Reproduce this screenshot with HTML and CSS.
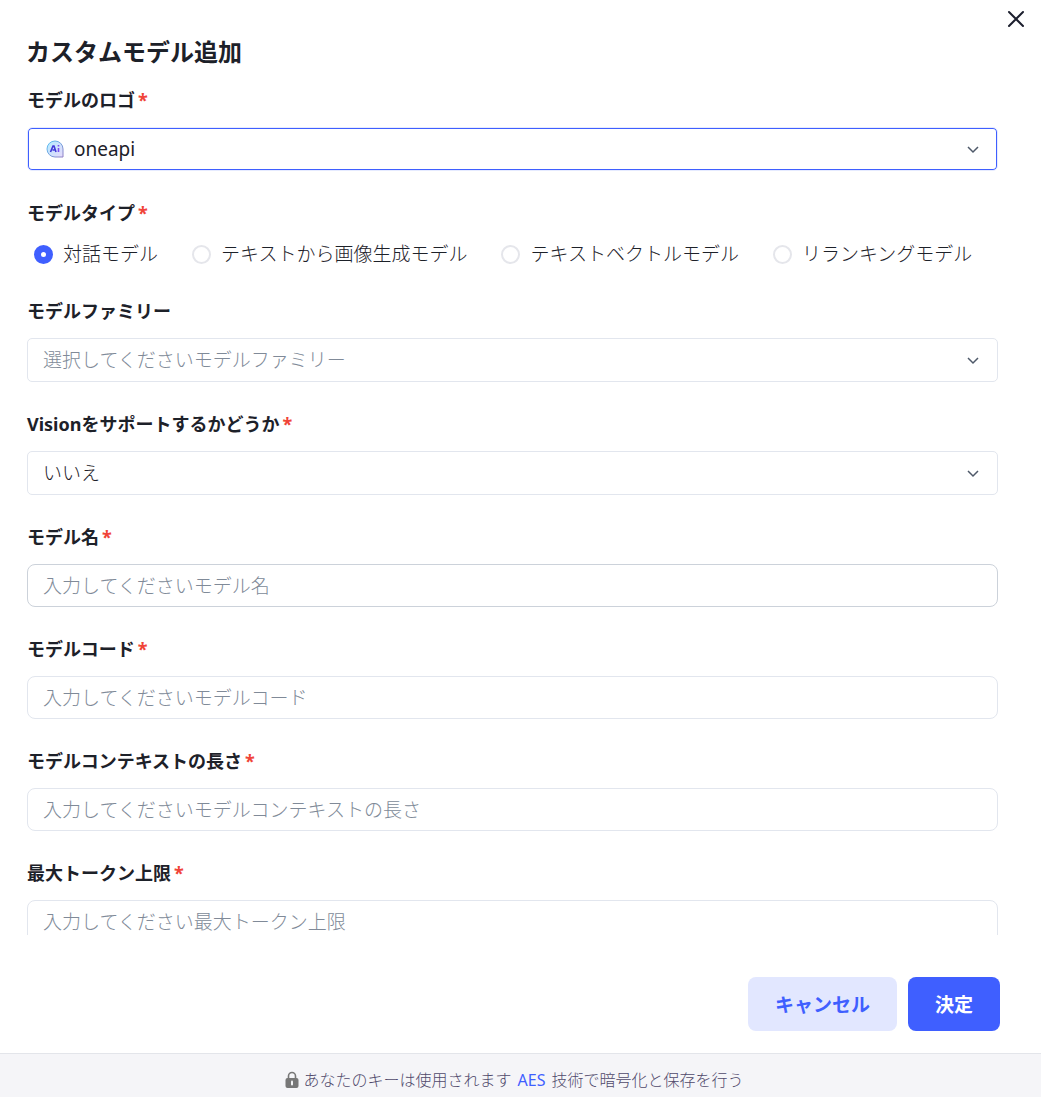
FILE: index.html
```html
<!DOCTYPE html>
<html lang="ja">
<head>
    <meta charset="UTF-8">
    <meta name="viewport" content="width=device-width, initial-scale=1.0">
    <title>カスタムモデル追加</title>
    <link rel="stylesheet" href="styles.css">
</head>
<body>

<div class="modal">
    <button type="button" class="close-btn" aria-label="閉じる">
        <svg width="18" height="18" viewBox="0 0 18 18" fill="none" stroke="#1c1f2e" stroke-width="2" stroke-linecap="round">
            <path d="M2 2l14 14M16 2L2 16"/>
        </svg>
    </button>

    <h1 class="modal-title">カスタムモデル追加</h1>

    <form class="modal-body" id="modelForm">
        <div class="field">
            <label class="field-label" for="logo">モデルのロゴ<span class="required">*</span></label>
            <div class="select-box">
                <svg class="logo-icon" width="18" height="18" viewBox="0 0 18 18">
                    <defs>
                        <linearGradient id="logoFill" x1="0" y1="0" x2="1" y2="1">
                            <stop offset="0" stop-color="#b4ecff"/>
                            <stop offset="1" stop-color="#e6d9fb"/>
                        </linearGradient>
                        <linearGradient id="logoLine" x1="0" y1="0" x2="1" y2="1">
                            <stop offset="0" stop-color="#5cc4f5"/>
                            <stop offset="1" stop-color="#8f7fc4"/>
                        </linearGradient>
                    </defs>
                    <path d="M9 1a8 8 0 1 0 0 16h8V9a8 8 0 0 0-8-8z" fill="url(#logoFill)" stroke="url(#logoLine)"/>
                    <path d="M4.500 12L7 6h1l2 6M6.500 10h2" fill="none" stroke="#4238d8" stroke-width="1.600"/>
                    <path d="M12.500 8v4M12.500 5v1.500" fill="none" stroke="#7a4df0" stroke-width="1.600"/>
                </svg>
                <select class="control with-icon focused" id="logo">
                    <option>oneapi</option>
                </select>
                <svg class="chevron" width="12" height="8" viewBox="0 0 12 8"><path d="M1 1l5 5 5-5"/></svg>
            </div>
        </div>

        <fieldset class="field">
            <legend class="field-label">モデルタイプ<span class="required">*</span></legend>
            <div class="radio-row">
                <label class="radio"><input type="radio" name="type" checked>対話モデル</label>
                <label class="radio"><input type="radio" name="type">テキストから画像生成モデル</label>
                <label class="radio"><input type="radio" name="type">テキストベクトルモデル</label>
                <label class="radio"><input type="radio" name="type">リランキングモデル</label>
            </div>
        </fieldset>

        <div class="field">
            <label class="field-label" for="family">モデルファミリー</label>
            <div class="select-box">
                <select class="control empty" id="family">
                    <option>選択してくださいモデルファミリー</option>
                </select>
                <svg class="chevron" width="12" height="8" viewBox="0 0 12 8"><path d="M1 1l5 5 5-5"/></svg>
            </div>
        </div>

        <div class="field">
            <label class="field-label" for="vision">Visionをサポートするかどうか<span class="required">*</span></label>
            <div class="select-box">
                <select class="control" id="vision">
                    <option>いいえ</option>
                    <option>はい</option>
                </select>
                <svg class="chevron" width="12" height="8" viewBox="0 0 12 8"><path d="M1 1l5 5 5-5"/></svg>
            </div>
        </div>

        <div class="field">
            <label class="field-label" for="name">モデル名<span class="required">*</span></label>
            <input type="text" class="control active" id="name" placeholder="入力してくださいモデル名">
        </div>

        <div class="field">
            <label class="field-label" for="code">モデルコード<span class="required">*</span></label>
            <input type="text" class="control" id="code" placeholder="入力してくださいモデルコード">
        </div>

        <div class="field">
            <label class="field-label" for="context">モデルコンテキストの長さ<span class="required">*</span></label>
            <input type="text" class="control" id="context" placeholder="入力してくださいモデルコンテキストの長さ">
        </div>

        <div class="field">
            <label class="field-label" for="maxTokens">最大トークン上限<span class="required">*</span></label>
            <input type="text" class="control" id="maxTokens" placeholder="入力してください最大トークン上限">
        </div>
    </form>

    <div class="actions">
        <button type="button" class="btn btn-cancel">キャンセル</button>
        <button type="submit" class="btn btn-ok" form="modelForm">決定</button>
    </div>

    <div class="notice">
        <svg class="lock" width="14" height="18" viewBox="0 0 14 18">
            <path d="M3.500 8V5a3.500 3.500 0 0 1 7 0v3" fill="none" stroke="#777" stroke-width="1.600"/>
            <rect x="0.500" y="7" width="13" height="10" rx="2" fill="#777"/>
            <rect x="6" y="9.500" width="2" height="5" rx="1" fill="#f4f5f7"/>
        </svg>
        <p>あなたのキーは使用されます <a href="#">AES</a> 技術で暗号化と保存を行う</p>
    </div>
</div>

</body>
</html>
```
FILE: styles.css
```css
* { box-sizing: border-box; }

body {
    margin: 0;
    font-family: "Noto Sans", "Noto Sans CJK JP", sans-serif;
    font-size: 19px;
    font-weight: 300;
    color: #1d2129;
    background: #fff;
}

.modal {
    position: relative;
    display: flex;
    flex-direction: column;
    height: 100vh;
    padding-top: 36px;
}

.close-btn {
    position: absolute;
    top: 3px;
    right: 9px;
    display: flex;
    align-items: center;
    justify-content: center;
    width: 32px;
    height: 32px;
    padding: 0;
    border: none;
    background: none;
    cursor: pointer;
}

.modal-title {
    margin: 0 43px 20px 26px;
    font-size: 24px;
    line-height: 32px;
    font-weight: bold;
}

/* scrolls when the fields do not fit */
.modal-body {
    flex: 1;
    min-height: 0;
    padding: 0 43px 0 27px;
    overflow-y: auto;
    scrollbar-width: none;
}

.field {
    margin: 0 0 30px;
    padding: 0;
    border: none;
    min-width: 0;
}

.field-label {
    display: block;
    margin-bottom: 15px;
    padding: 0;
    font-size: 18px;
    line-height: 24px;
    font-weight: bold;
}

.required {
    margin-left: 3px;
    color: #f04438;
}

.control {
    display: block;
    width: 100%;
    height: 43px;
    padding: 0 15px;
    border: 1px solid #e2e6ee;
    border-radius: 8px;
    background: #fff;
    color: #1d2129;
    font-family: inherit;
    font-size: 19px;
    font-weight: inherit;
    outline: none;
}

.control::placeholder { color: #808a98; opacity: 1; }
.control.active { border-color: #ccd2da; }

/* --- select --- */
.select-box { position: relative; }

select.control {
    height: 44px;
    padding: 0 40px 0 15px;
    border-radius: 5px;
    appearance: none;
}

select.empty { color: #808a98; }

select.with-icon {
    padding-left: 46px;
    font-weight: normal;
}

select.focused {
    border-color: #e6ebff;
    box-shadow: inset 0 0 0 1px #3f5fff;
}

.logo-icon {
    position: absolute;
    left: 19px;
    top: 13px;
    pointer-events: none;
}

.chevron {
    position: absolute;
    right: 19px;
    top: 19px;
    fill: none;
    stroke: #4e5969;
    stroke-width: 1.5;
    pointer-events: none;
}

/* --- radio --- */
.radio-row {
    display: flex;
    flex-wrap: wrap;
    gap: 12px 34px;
    padding-left: 7px;
}

.radio {
    display: flex;
    align-items: center;
    gap: 10px;
    line-height: 29px;
    white-space: nowrap;
}

.radio input {
    appearance: none;
    width: 19px;
    height: 19px;
    margin: 0;
    border: 2px solid #e5e6eb;
    border-radius: 50%;
    background: #fff;
}

.radio input:checked { border: 7px solid #3f5fff; }

/* --- buttons --- */
.actions {
    display: flex;
    justify-content: flex-end;
    gap: 11px;
    padding: 42px 41px 22px 27px;
}

.btn {
    height: 54px;
    padding: 0 27px;
    border: none;
    border-radius: 8px;
    font-family: inherit;
    font-size: 19px;
    font-weight: bold;
    cursor: pointer;
}

.btn-cancel { background: #e2e7ff; color: #3f5fff; }
.btn-ok { background: #3f5fff; color: #fff; }

.notice {
    display: flex;
    align-items: center;
    justify-content: center;
    gap: 4px;
    padding: 14px 12px 5px 0;
    border-top: 1px solid #e3e5ea;
    background: #f5f5f8;
    color: #50496b;
    font-size: 16px;
    line-height: 24px;
}

.notice p { margin: 0; }

.notice a {
    margin: 0 2px;
    color: #3f5fff;
    font-weight: normal;
    text-decoration: none;
}
```
